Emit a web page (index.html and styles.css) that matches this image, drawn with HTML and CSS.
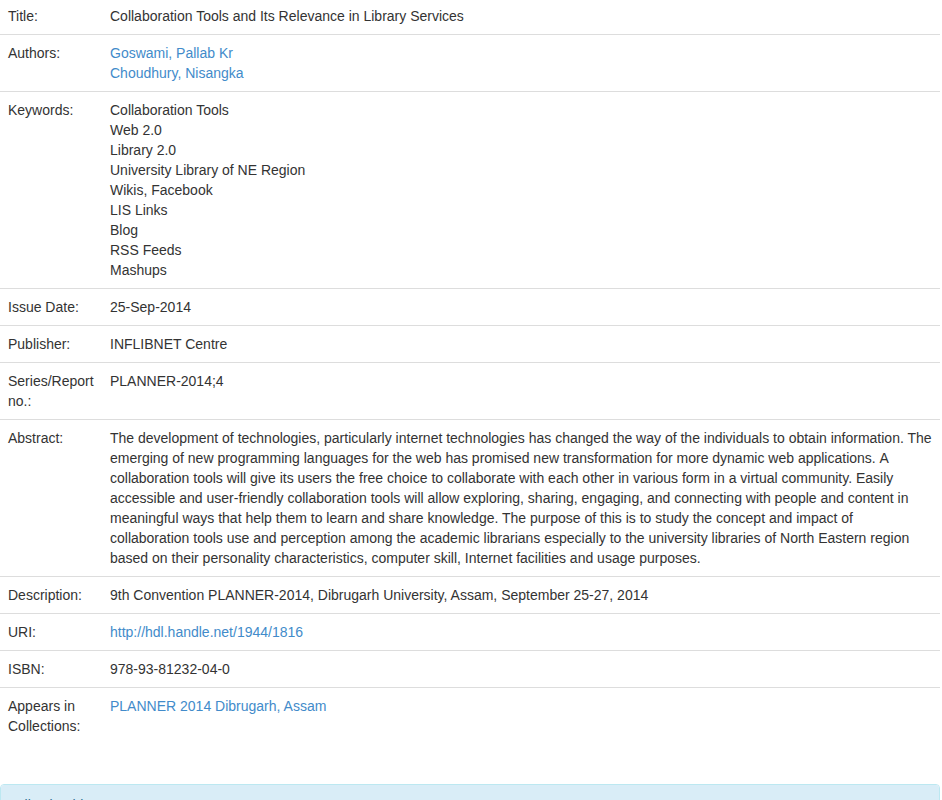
FILE: index.html
```html
<!DOCTYPE html>
<html>
<head>
<meta charset="utf-8">
<link rel="stylesheet" href="styles.css">
</head>
<body>
<div class="page">
<table class="item-table">
<tr><td class="label">Title:</td><td class="value">Collaboration Tools and Its Relevance in Library Services</td></tr>
<tr><td class="label">Authors:</td><td class="value"><a href="#">Goswami, Pallab Kr</a><br><a href="#">Choudhury, Nisangka</a></td></tr>
<tr><td class="label">Keywords:</td><td class="value">Collaboration Tools<br>Web 2.0<br>Library 2.0<br>University Library of NE Region<br>Wikis, Facebook<br>LIS Links<br>Blog<br>RSS Feeds<br>Mashups</td></tr>
<tr><td class="label">Issue Date:</td><td class="value">25-Sep-2014</td></tr>
<tr><td class="label">Publisher:</td><td class="value">INFLIBNET Centre</td></tr>
<tr><td class="label">Series/Report no.:</td><td class="value">PLANNER-2014;4</td></tr>
<tr><td class="label">Abstract:</td><td class="value">The development of technologies, particularly internet technologies has changed the way of the individuals to obtain information. The emerging of new programming languages for the web has promised new transformation for more dynamic web applications.&nbsp;A collaboration tools will give its users the free choice to collaborate with each other in various form in a virtual community. Easily accessible and user-friendly collaboration tools will allow exploring, sharing, engaging, and connecting with people and content in meaningful ways that help them to learn and share knowledge. The purpose of this is to study the concept and impact of collaboration tools use and perception among the academic librarians especially to the university libraries of North Eastern region based on their personality characteristics, computer skill, Internet facilities and usage purposes.</td></tr>
<tr><td class="label">Description:</td><td class="value">9th Convention PLANNER-2014, Dibrugarh University, Assam, September 25-27, 2014</td></tr>
<tr><td class="label">URI:</td><td class="value"><a href="#">http://hdl.handle.net/1944/1816</a></td></tr>
<tr><td class="label">ISBN:</td><td class="value">978-93-81232-04-0</td></tr>
<tr><td class="label">Appears in Collections:</td><td class="value"><a href="#">PLANNER 2014 Dibrugarh, Assam</a></td></tr>
</table>
<div class="panel">
<div class="panel-heading">Files in This Item:</div>
<div class="panel-body">&nbsp;</div>
</div>
</div>
</body>
</html>
```

FILE: styles.css
```css
html, body {
  margin: 0;
  padding: 0;
  background: #fff;
}
body {
  font-family: "Liberation Sans", Arial, sans-serif;
  font-size: 14px;
  line-height: 20px;
  color: #333;
}
.page {
  width: 940px;
  margin-top: -3px;
}
.item-table {
  width: 100%;
  table-layout: fixed;
  border-collapse: collapse;
  border-spacing: 0;
  margin-bottom: 40px;
}
.item-table td {
  padding: 8px;
  vertical-align: top;
  border-top: 1px solid #ddd;
}
.item-table td.label {
  width: 86px;
}
.item-table td.value {
  padding-right: 6px;
}
a {
  color: #428bca;
  text-decoration: none;
}
.panel {
  border: 1px solid #bce8f1;
  border-radius: 4px;
  background: #fff;
}
.panel-heading {
  background: #d9edf7;
  color: #31708f;
  padding: 10px 15px;
  border-bottom: 1px solid #bce8f1;
  border-radius: 3px 3px 0 0;
}
.panel-body {
  padding: 15px;
}
```
